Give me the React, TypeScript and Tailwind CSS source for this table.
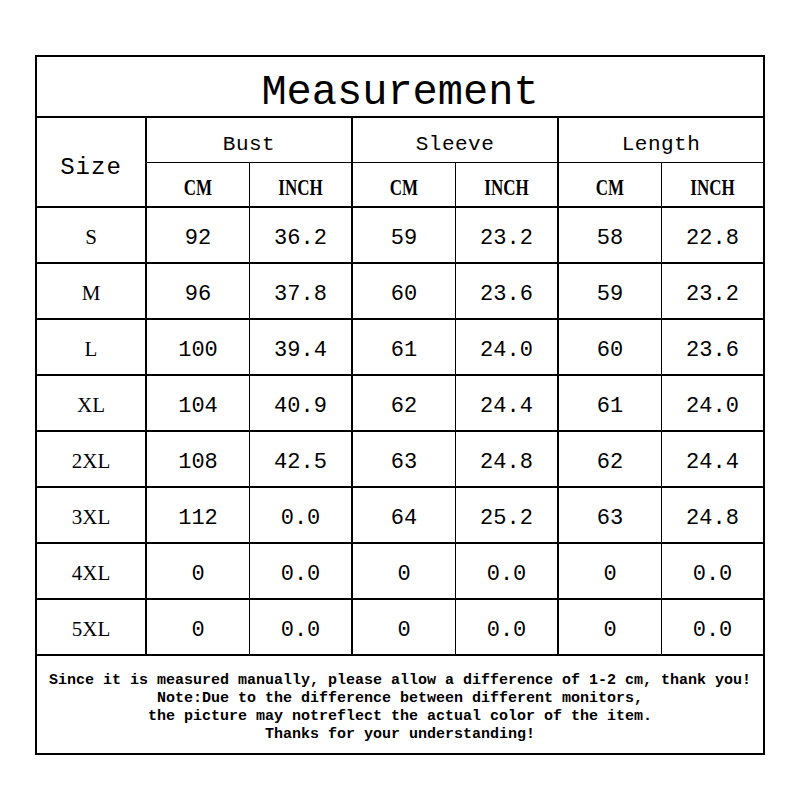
import React from 'react';

const rows = [
  ['S', '92', '36.2', '59', '23.2', '58', '22.8'],
  ['M', '96', '37.8', '60', '23.6', '59', '23.2'],
  ['L', '100', '39.4', '61', '24.0', '60', '23.6'],
  ['XL', '104', '40.9', '62', '24.4', '61', '24.0'],
  ['2XL', '108', '42.5', '63', '24.8', '62', '24.4'],
  ['3XL', '112', '0.0', '64', '25.2', '63', '24.8'],
  ['4XL', '0', '0.0', '0', '0.0', '0', '0.0'],
  ['5XL', '0', '0.0', '0', '0.0', '0', '0.0'],
];

const mono = "font-['Liberation_Mono','DejaVu_Sans_Mono',monospace]";
const serif = "font-['Liberation_Serif','Times_New_Roman',serif]";

// border after each data column: thin inside a group, thick between groups
const colBorder = ['border-r', 'border-r-2', 'border-r', 'border-r-2', 'border-r', ''];
const colWidth = ['w-[103px]', 'w-[103px]', 'w-[103px]', 'w-[103px]', 'w-[103px]', 'flex-1'];

const App = () => {
  return (
    <div className="w-[800px] h-[800px] bg-white pt-[55px] pl-[35px] text-black">
      <div className="w-[730px] border-2 border-black flex flex-col">
        {/* Title */}
        <div className="h-[61px] border-b-2 border-black flex items-center justify-center">
          <span className={`${mono} text-[42px] leading-none pt-[12px]`}>Measurement</span>
        </div>

        {/* Header */}
        <div className="h-[90px] border-b-2 border-black flex">
          <div className="w-[110px] border-r-2 border-black flex items-center justify-center">
            <span className={`${mono} text-[24px] tracking-[1px] pt-[12px]`}>Size</span>
          </div>
          <div className="flex-1 flex flex-col">
            <div className="h-[45px] border-b border-black flex">
              {['Bust', 'Sleeve', 'Length'].map((g, i) => (
                <div
                  key={g}
                  className={`${i < 2 ? 'w-[206px] border-r-2' : 'flex-1'} border-black flex items-center justify-center`}
                >
                  <span className={`${mono} text-[21px] tracking-[0.5px] pt-[10px]`}>{g}</span>
                </div>
              ))}
            </div>
            <div className="flex-1 flex">
              {['CM', 'INCH', 'CM', 'INCH', 'CM', 'INCH'].map((h, i) => (
                <div
                  key={i}
                  className={`${colWidth[i]} ${colBorder[i]} border-black flex items-center justify-center`}
                >
                  <span className={`${serif} inline-block font-bold text-[17px] scale-y-[1.3] pt-[6px]`}>{h}</span>
                </div>
              ))}
            </div>
          </div>
        </div>

        {/* Data rows */}
        {rows.map((r) => (
          <div key={r[0]} className="h-[56px] border-b-2 border-black flex">
            <div className="w-[110px] border-r-2 border-black flex items-center justify-center">
              <span className={`${serif} text-[21px] pt-[6px]`}>{r[0]}</span>
            </div>
            {r.slice(1).map((v, i) => (
              <div
                key={i}
                className={`${colWidth[i]} ${colBorder[i]} border-black flex items-center justify-center`}
              >
                <span className={`${mono} text-[22px] pt-[6px]`}>{v}</span>
              </div>
            ))}
          </div>
        ))}

        {/* Footer note */}
        <div className="h-[97px] flex flex-col items-center justify-center">
          <div className={`${mono} font-bold text-[15px] leading-[18px] text-center whitespace-pre pt-[6px]`}>
            <div>Since it is measured manually, please allow a difference of 1-2 cm, thank you!</div>
            <div>Note:Due to the difference between different monitors,</div>
            <div>the picture may notreflect the actual color of the item.</div>
            <div>Thanks for your understanding!</div>
          </div>
        </div>
      </div>
    </div>
  );
};

export default App;
